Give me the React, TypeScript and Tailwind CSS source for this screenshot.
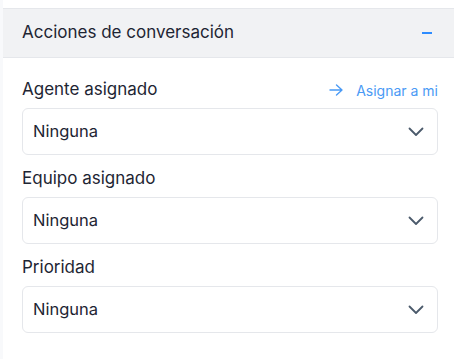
import React from 'react';

const Chevron = () => (
  <svg width="16" height="10" viewBox="0 0 16 10" fill="none" className="text-[#4b5a6b]">
    <path d="M1.5 1.5 8 8l6.5-6.5" stroke="currentColor" strokeWidth="1.8" strokeLinecap="round" strokeLinejoin="round" />
  </svg>
);

const SelectBox = ({ value }: { value: string }) => (
  <div className="flex h-[47px] items-center justify-between rounded-md border border-[#e5e7eb] bg-white pl-[10px] pr-[13px]">
    <span className="text-[16.5px] text-[#1e2533]">{value}</span>
    <Chevron />
  </div>
);

export default function App() {
  const fields = [
    { label: 'Agente asignado', action: true },
    { label: 'Equipo asignado', action: false },
    { label: 'Prioridad', action: false },
  ];

  return (
    <div className="flex h-[359px] w-[454px] bg-white" style={{ fontFamily: 'Inter, "Noto Sans", sans-serif' }}>
      <div className="w-[3px] bg-[#f8f9fb]" />
      <div className="flex-1 pt-[8px]">
        <div className="flex h-[50px] items-center justify-between border-y border-[#e5e7eb] bg-[#f1f2f4] pl-[19px] pr-[22px]">
          <span className="text-[17px] text-[#1e2533]">Acciones de conversación</span>
          <span className="block h-[1.5px] w-[10px] bg-[#2d8cff]" />
        </div>
        <div className="flex flex-col gap-[12px] pl-[19px] pr-[16px] pt-[20px]">
          {fields.map(f => (
            <div key={f.label} className="flex flex-col gap-[6px]">
              <div className="flex h-[24px] items-center justify-between">
                <span className="text-[17px] text-[#1e2533]">{f.label}</span>
                {f.action && (
                  <span className="flex items-center gap-[13px] text-[14px] text-[#4a9af5]">
                    <svg width="14" height="12" viewBox="0 0 14 12" fill="none">
                      <path d="M1 6h12M7.5 1 13 6l-5.5 5" stroke="currentColor" strokeWidth="1.4" strokeLinecap="round" strokeLinejoin="round" />
                    </svg>
                    Asignar a mi
                  </span>
                )}
              </div>
              <SelectBox value="Ninguna" />
            </div>
          ))}
        </div>
      </div>
    </div>
  );
}
